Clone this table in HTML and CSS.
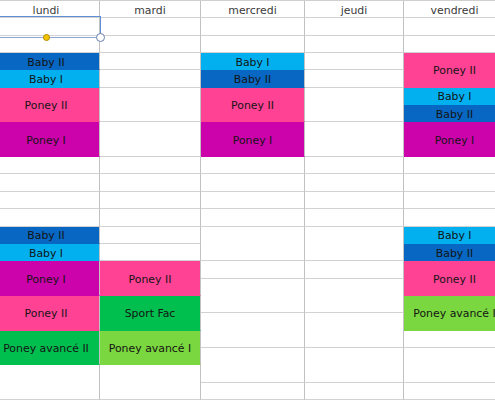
FILE: index.html
```html
<!DOCTYPE html>
<html lang="fr">
<head>
<meta charset="utf-8">
<title>Planning</title>
<link rel="stylesheet" href="styles.css">
</head>
<body>
<div class="sheet">
  <div class="grid">
    <div class="col">
      <div class="cell head">lundi</div>
      <div class="cell"></div><div class="cell"></div>
      <div class="cell dk">Baby II</div>
      <div class="cell lt">Baby I</div>
      <div class="cell s2 pk">Poney II</div>
      <div class="cell s2 mg">Poney I</div>
      <div class="cell"></div><div class="cell"></div><div class="cell"></div><div class="cell"></div>
      <div class="cell dk">Baby II</div>
      <div class="cell lt">Baby I</div>
      <div class="cell s2 mg">Poney I</div>
      <div class="cell s2 pk">Poney II</div>
      <div class="cell s2 gr">Poney avancé II</div>
      <div class="cell s2"></div>
    </div>
    <div class="col">
      <div class="cell head">mardi</div>
      <div class="cell"></div><div class="cell"></div>
      <div class="cell"></div><div class="cell"></div>
      <div class="cell s2"></div>
      <div class="cell s2"></div>
      <div class="cell"></div><div class="cell"></div><div class="cell"></div><div class="cell"></div>
      <div class="cell"></div><div class="cell"></div>
      <div class="cell s2 pk">Poney II</div>
      <div class="cell s2 gr">Sport Fac</div>
      <div class="cell s2 lg">Poney avancé I</div>
      <div class="cell s2"></div>
    </div>
    <div class="col">
      <div class="cell head">mercredi</div>
      <div class="cell"></div><div class="cell"></div>
      <div class="cell lt">Baby I</div>
      <div class="cell dk">Baby II</div>
      <div class="cell s2 pk">Poney II</div>
      <div class="cell s2 mg">Poney I</div>
      <div class="cell"></div><div class="cell"></div><div class="cell"></div><div class="cell"></div>
      <div class="cell s2"></div>
      <div class="cell"></div>
      <div class="cell s2"></div>
      <div class="cell s2"></div>
      <div class="cell s2"></div>
      <div class="cell"></div>
    </div>
    <div class="col">
      <div class="cell head">jeudi</div>
      <div class="cell"></div><div class="cell"></div>
      <div class="cell"></div><div class="cell"></div>
      <div class="cell s2"></div>
      <div class="cell s2"></div>
      <div class="cell"></div><div class="cell"></div><div class="cell"></div><div class="cell"></div>
      <div class="cell s2"></div>
      <div class="cell"></div>
      <div class="cell s2"></div>
      <div class="cell s2"></div>
      <div class="cell s2"></div>
      <div class="cell"></div>
    </div>
    <div class="col">
      <div class="cell head">vendredi</div>
      <div class="cell"></div><div class="cell"></div>
      <div class="cell s2 pk">Poney II</div>
      <div class="cell lt">Baby I</div>
      <div class="cell dk">Baby II</div>
      <div class="cell s2 mg">Poney I</div>
      <div class="cell"></div><div class="cell"></div><div class="cell"></div><div class="cell"></div>
      <div class="cell lt">Baby I</div>
      <div class="cell dk">Baby II</div>
      <div class="cell s2 pk">Poney II</div>
      <div class="cell s2 lg">Poney avancé I</div>
      <div class="cell"></div>
      <div class="cell s2"></div>
      <div class="cell"></div>
    </div>
  </div>
  <div class="selection"></div>
  <div class="handle-fill"></div>
  <div class="handle-corner"></div>
</div>
</body>
</html>
```
FILE: styles.css
```css
* { box-sizing: border-box; }
html, body {
  margin: 0;
  padding: 0;
  background: #ffffff;
  overflow: hidden;
}
.sheet {
  position: relative;
  width: 495px;
  height: 400px;
  overflow: hidden;
  font-family: "DejaVu Sans", Verdana, sans-serif;
  font-size: 10.9px;
  color: #141414;
}
.grid {
  display: grid;
  grid-template-columns: 107px 101px 104px 99px 102px;
  margin-left: -7px;
  width: 513px;
  height: 400px;
  border-top: 1px solid #d0d0d0;
}
.col {
  display: grid;
  grid-template-rows: repeat(23, 1fr);
  min-height: 0;
}
.cell {
  display: flex;
  align-items: center;
  justify-content: center;
  white-space: nowrap;
  overflow: hidden;
  border-right: 1px solid #c2c2c2;
  border-bottom: 1px solid #d2d2d2;
  min-height: 0;
}
.s2 { grid-row: span 2; }
.head {
  color: #3a3a3a;
  padding-top: 2px;
}
.dk, .lt, .pk, .mg, .gr, .lg {
  border-bottom-color: transparent;
  padding-top: 2px;
}
.dk { background: #0867c3; }
.lt { background: #02b0f0; }
.pk { background: #ff4294; }
.mg { background: #cc02ab; }
.gr { background: #00bf4f; }
.lg { background: #7bd73f; }

.selection {
  position: absolute;
  left: -10px;
  top: 16px;
  width: 111px;
  height: 22px;
  border: 1px solid #5d8fd8;
  border-bottom-color: #8fa7d3;
}
.handle-fill {
  position: absolute;
  left: 43px;
  top: 34px;
  width: 7px;
  height: 7px;
  border-radius: 50%;
  background: #f3c400;
  border: 1px solid #b28a00;
}
.handle-corner {
  position: absolute;
  left: 96px;
  top: 33px;
  width: 9px;
  height: 9px;
  border-radius: 50%;
  background: #ffffff;
  border: 1.5px solid #6a7fae;
}
```
